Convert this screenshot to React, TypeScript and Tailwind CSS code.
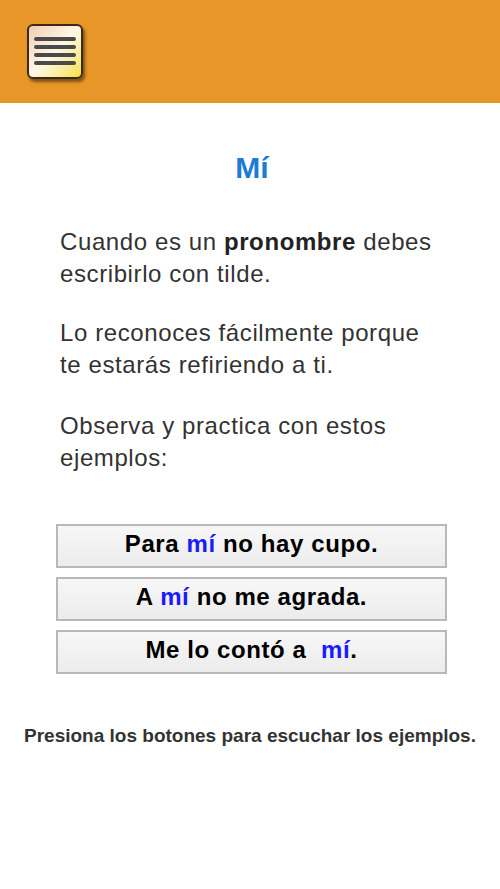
import React from "react"

const examples = [
  { before: "Para ", word: "mí", after: " no hay cupo." },
  { before: "A ", word: "mí", after: " no me agrada." },
  { before: "Me lo contó a  ", word: "mí", after: "." },
]

const MenuButton = () => (
  <button className="w-[56px] h-[55px] rounded-[6px] border-2 border-[#3a2a1a] bg-gradient-to-br from-[#f0cdb4] via-[#fff8e6] to-[#f6e030] shadow-[2px_3px_3px_rgba(0,0,0,0.45)] flex flex-col items-center justify-center gap-[4px]">
    <span className="block w-[42px] h-[4px] rounded-full bg-[#4a4a4a]" />
    <span className="block w-[42px] h-[4px] rounded-full bg-[#4a4a4a]" />
    <span className="block w-[42px] h-[4px] rounded-full bg-[#4a4a4a]" />
    <span className="block w-[42px] h-[4px] rounded-full bg-[#4a4a4a]" />
  </button>
)

export default function App() {
  return (
    <div className="w-[500px] h-[889px] bg-white font-['Liberation_Sans',Arial,sans-serif]">
      <header className="h-[103px] bg-[#e79627] flex items-center pl-[27px] pb-[1px]">
        <MenuButton />
      </header>

      <h1 className="mt-[46px] text-center text-[30px] font-bold text-[#1c7bd3] leading-[38px] pl-[4px]">Mí</h1>

      <div className="mt-[39px] ml-[60px] w-[385px] text-[24px] tracking-[0.6px] leading-[32px] text-[#333333]">
        <p>
          Cuando es un <b className="text-[#222]">pronombre</b> debes escribirlo con tilde.
        </p>
        <p className="mt-[27px]">Lo reconoces fácilmente porque te estarás refiriendo a ti.</p>
        <p className="mt-[29px]">Observa y practica con estos ejemplos:</p>
      </div>

      <div className="mt-[50px] mx-[56px] flex flex-col gap-[9px]">
        {examples.map((ex, i) => (
          <button
            key={i}
            className="h-[44px] w-[391px] pb-[6px] border-2 border-[#b8b8b8] bg-gradient-to-b from-[#f7f7f7] to-[#ececec] text-[24px] tracking-[0.6px] font-bold text-black whitespace-pre"
          >
            {ex.before}
            <span className="text-[#1a1aff]">{ex.word}</span>
            {ex.after}
          </button>
        ))}
      </div>

      <p className="mt-[51px] text-center text-[19px] leading-[22px] font-bold text-[#333333]">
        Presiona los botones para escuchar los ejemplos.
      </p>
    </div>
  )
}
